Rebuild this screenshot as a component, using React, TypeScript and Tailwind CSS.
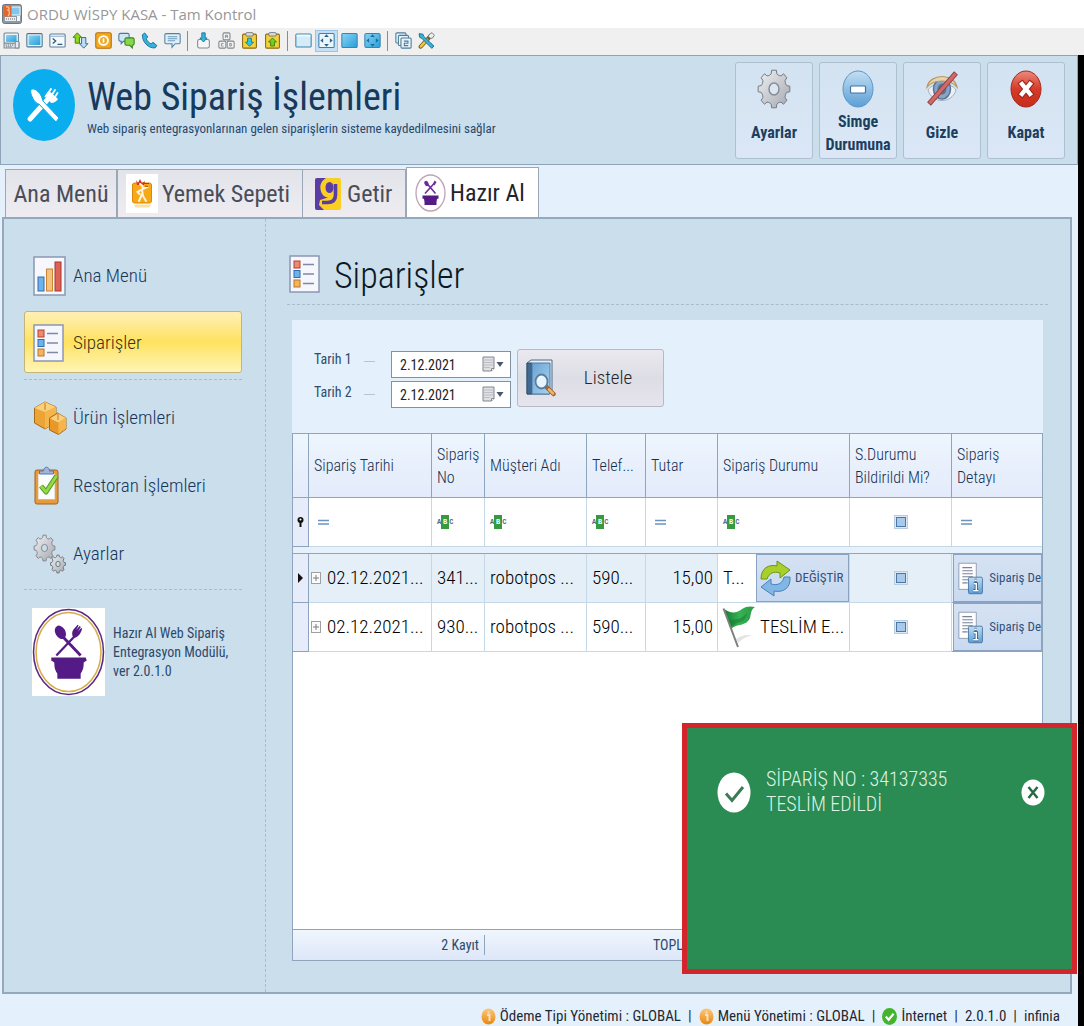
import type { ReactNode } from 'react';

/* ---------- toolbar icons (16x16) ---------- */

function Ico({ children }: { children: ReactNode }) {
  return (
    <svg width="17" height="17" viewBox="0 0 16 16" fill="none" aria-hidden="true">
      {children}
    </svg>
  );
}

const Arrows4 = ({ color }: { color: string }) => (
  <g fill={color}>
    <path d="M8 2.2l2.2 2.6H5.8z" />
    <path d="M8 13.8l2.2-2.6H5.8z" />
    <path d="M2.2 8l2.6-2.2v4.4z" />
    <path d="M13.8 8l-2.6-2.2v4.4z" />
  </g>
);

const Clipboard = ({ up = false }: { up?: boolean }) => (
  <>
    <rect x="1.5" y="2" width="13" height="13.2" rx="1" fill="#f3d03c" stroke="#8c6a12" />
    <rect x="4.5" y="0.6" width="7" height="3.2" rx="1" fill="#d9dde0" stroke="#6b6f73" strokeWidth=".8" />
    {up ? (
      <path d="M8 5.6l3.8 3.8H9.8v3.8H6.2V9.4H4.2z" fill="#6ed31c" stroke="#2e7d12" strokeWidth=".8" />
    ) : (
      <path d="M8 13.4l3.8-3.8H9.8V5.8H6.2v3.8H4.2z" fill="#35c6de" stroke="#1b7284" strokeWidth=".8" />
    )}
  </>
);

const toolGroups: { label: string; active?: boolean; art: ReactNode }[][] = [
  [
    {
      label: 'Bilgisayar',
      art: (
        <>
          <rect x="1" y="1" width="13.5" height="9.500" rx="1" fill="#f2f5f7" stroke="#6b8295" />
          <rect x="2.8" y="2.8" width="10" height="6.500" fill="url(#tbBlue)" />
          <path d="M1 10.500h14v4.500H1z" fill="#dfe4e8" stroke="#7d8a95" />
          <path d="M2.500 12.200h7M3 13.800h6" stroke="#536270" strokeDasharray="1 1" />
          <rect x="11.500" y="9" width="3.500" height="6" rx=".6" fill="#e8ecef" stroke="#7d8a95" />
        </>
      ),
    },
    {
      label: 'Ekran',
      art: (
        <>
          <rect x=".8" y="1.500" width="14.400" height="12.500" rx="1" fill="#eef6fb" stroke="#47708f" />
          <rect x="2.500" y="3.200" width="11" height="9" fill="url(#tbBlue)" />
        </>
      ),
    },
    {
      label: 'Komut satırı',
      art: (
        <>
          <rect x=".8" y="1.8" width="14.4" height="12.4" rx="1" fill="#f4f9fc" stroke="#5b7f9b" />
          <path d="M1 4h14" stroke="#8fb2cb" />
          <path d="M3.5 6.2l2.8 2.3-2.8 2.3M8 11.6h4.5" stroke="#2f5a7c" strokeWidth="1.2" />
        </>
      ),
    },
    {
      label: 'Dosya aktarımı',
      art: (
        <>
          <path d="M5 .8l4 4.2H7v5.5H3V5H1z" fill="#8fd61f" stroke="#3e7d18" strokeWidth=".9" />
          <path d="M11 15.2l4-4.2h-2V5.2H9V11H7z" fill="#b9dff2" stroke="#2a6a96" strokeWidth=".9" />
        </>
      ),
    },
    {
      label: 'Güç',
      art: (
        <>
          <rect x=".7" y=".7" width="14.6" height="14.6" rx="1.5" fill="#f4a81c" stroke="#b76e0b" />
          <circle cx="8" cy="8" r="4.2" stroke="#fff" strokeWidth="1.7" />
          <path d="M8 6v4" stroke="#fff" strokeWidth="1.6" />
        </>
      ),
    },
    {
      label: 'Sohbet',
      art: (
        <>
          <path d="M.8 2.800c0-1 .5-1.500 1.500-1.500H9c1 0 1.500.5 1.500 1.500v4.500c0 1-.5 1.500-1.500 1.500H5l-2 2.200V8.800C1.500 8.800.8 8.300.8 7.300z" fill="#cfe7f5" stroke="#46799d" />
          <path d="M6.500 7c0-1 .5-1.500 1.500-1.500h5.700c1 0 1.500.5 1.500 1.500v4c0 1-.5 1.500-1.700 1.500v2.500L11 12.500H8c-1 0-1.500-.5-1.500-1.500z" fill="#86d84a" stroke="#3a8222" />
        </>
      ),
    },
    {
      label: 'Telefon',
      art: (
        <path
          d="M1.3 2.6l2.2-1.7L6.4 4.6 4.9 6.3c.9 2.1 2.4 3.7 4.6 4.9l1.8-1.5 3.6 3-1.5 2.2C7 15.9.9 9 1.3 2.6z"
          fill="#38b2dc"
          stroke="#1c6f9b"
          strokeWidth=".9"
        />
      ),
    },
    {
      label: 'Mesaj',
      art: (
        <>
          <path d="M2 1.500h12c.8 0 1.200.4 1.200 1.200v7.100c0 .8-.4 1.200-1.200 1.200h-3.500L7.500 14.500V11H2c-.8 0-1.200-.4-1.200-1.200V2.700c0-.8.4-1.200 1.200-1.200z" fill="#dff0fa" stroke="#52829f" />
          <path d="M3.500 4.400h9M3.500 6.300h9M3.500 8.200h7" stroke="#6c9bbb" />
        </>
      ),
    },
  ],
  [
    {
      label: 'Ctrl+Alt+Del',
      art: (
        <>
          <path d="M2.500 8.500c0-1 .5-1.500 1.500-1.500h8c1 0 1.500.5 1.500 1.500V13.500c0 1-.5 1.500-1.500 1.500H4c-1 0-1.500-.5-1.500-1.500z" fill="#f4f5f6" stroke="#83898e" />
          <path d="M8 9.4l3.4-3.8H9.6V.8H6.4v4.8H4.6z" fill="#35b4dd" stroke="#1b6d8f" strokeWidth=".8" />
        </>
      ),
    },
    {
      label: 'Tuş gönder',
      art: (
        <g stroke="#83878b" fill="#f1f2f3">
          <rect x="4.700" y=".8" width="6.600" height="6.600" rx="1.200" />
          <rect x=".8" y="8.600" width="6.600" height="6.600" rx="1.200" />
          <rect x="8.600" y="8.600" width="6.600" height="6.600" rx="1.200" />
          <path d="M7 5.500V3h2v2.500M7 4.300h2M5.200 10.800h-2v2.400h2M11 10.800h1.500v2.400H11z" strokeWidth=".8" />
        </g>
      ),
    },
    { label: 'Panodan al', art: <Clipboard /> },
    { label: 'Panoya gönder', art: <Clipboard up /> },
  ],
  [
    {
      label: 'Pencere',
      art: (
        <>
          <rect x=".8" y="1.8" width="14.4" height="12.4" rx="1" fill="#d3ecf8" stroke="#3d82ae" />
          <path d="M1.500 3.400h13" stroke="#f0fafe" strokeWidth="1.600" />
        </>
      ),
    },
    {
      label: 'Sığdır',
      active: true,
      art: (
        <>
          <rect x=".8" y="1.4" width="14.4" height="13.2" rx="1" fill="#eaf6fc" stroke="#3d7fa9" />
          <Arrows4 color="#2b6288" />
        </>
      ),
    },
    {
      label: 'Tam ekran',
      art: <rect x=".8" y="1.4" width="14.4" height="13.2" rx="1" fill="url(#tbBlue)" stroke="#3d82ae" />,
    },
    {
      label: 'Ölçekle',
      art: (
        <>
          <rect x=".8" y="1.4" width="14.4" height="13.2" rx="1.5" fill="url(#tbBlue)" stroke="#3d82ae" />
          <Arrows4 color="#1b6e9e" />
        </>
      ),
    },
  ],
  [
    {
      label: 'Pencereler',
      art: (
        <g stroke="#4d7c99" fill="#e8f3f9">
          <rect x=".8" y=".8" width="9.5" height="9.5" rx="1" />
          <rect x="3.2" y="3.2" width="9.5" height="9.5" rx="1" />
          <rect x="5.6" y="5.6" width="9.6" height="9.6" rx="1" />
          <path d="M8.4 8.6h3.8v2H8.8v2.2h3.6" fill="none" />
        </g>
      ),
    },
    {
      label: 'Araçlar',
      art: (
        <>
          <path d="M2.500 13.800l9-9.600" stroke="#6b5a1c" strokeWidth="3.800" strokeLinecap="round" />
          <path d="M2.700 13.600l6-6.400" stroke="#f2c53b" strokeWidth="2.400" strokeLinecap="round" />
          <path d="M10.2 2.600l3-2 2.200 2.400-1.800 2.800-2 .2-1.800-1.800z" fill="#eceff0" stroke="#6a6f72" strokeWidth=".8" />
          <path d="M1 1.600l3.600.4.8 2.200 9.600 9-2 2.200L3.800 6.200 1.600 5z" fill="#39b1dc" stroke="#1b6c90" strokeWidth=".9" />
        </>
      ),
    },
  ],
];

/* ---------- larger drawings ---------- */

const gearPath = (cx: number, cy: number, rx: number, ry: number, teeth = 8) => {
  const pts: string[] = [];
  for (let i = 0; i < teeth; i++) {
    const a = (i / teeth) * Math.PI * 2 - Math.PI / 2;
    const s = Math.PI / teeth;
    [
      [a - s * 0.9, 0.78],
      [a - s * 0.55, 0.82],
      [a - s * 0.38, 1],
      [a + s * 0.38, 1],
      [a + s * 0.55, 0.82],
      [a + s * 0.9, 0.78],
    ].forEach(([ang, r]) => pts.push(`${(cx + Math.cos(ang) * rx * r).toFixed(2)} ${(cy + Math.sin(ang) * ry * r).toFixed(2)}`));
  }
  return `M${pts.join('L')}Z`;
};

const GearIcon = () => (
  <svg width="34" height="40" viewBox="0 0 34 40" aria-hidden="true">
    <path d={gearPath(17, 20, 16, 19)} fill="url(#gearG)" stroke="#777b82" strokeLinejoin="round" />
    <ellipse cx="17" cy="20" rx="5" ry="6" fill="#dce6f2" stroke="#888d95" strokeWidth="1.5" />
  </svg>
);

const MinusIcon = () => (
  <svg width="34" height="40" viewBox="0 0 34 40" aria-hidden="true">
    <ellipse cx="17" cy="20" rx="15" ry="18" fill="url(#minusG)" stroke="#5c97c4" />
    <rect x="9.5" y="17" width="15" height="7" rx="1" fill="#fff" stroke="#3f74a3" strokeWidth="1.2" />
  </svg>
);

const EyeIcon = () => (
  <svg width="34" height="40" viewBox="0 0 34 40" fill="none" aria-hidden="true">
    <path d="M3 21c5-8 23-8 28 0-4 14-24 14-28 0z" fill="#edf1f6" stroke="#a5aebb" />
    <ellipse cx="17" cy="20" rx="8.500" ry="10" fill="#8aa4c4" stroke="#54749a" strokeWidth="1.500" />
    <ellipse cx="17" cy="20" rx="4.500" ry="5.500" fill="#5a7599" />
    <path d="M2 18C5 4 29 4 32 18c-7-8-23-8-30 0z" fill="#e8d3b0" stroke="#b9985f" strokeWidth="1.200" />
    <path d="M31 4L4 35" stroke="#8f3d3d" strokeWidth="5" />
    <path d="M30.500 4.600L4.500 34.400" stroke="#cf6a66" strokeWidth="3.400" />
  </svg>
);

const CloseIcon = () => (
  <svg width="34" height="40" viewBox="0 0 34 40" aria-hidden="true">
    <ellipse cx="17" cy="20" rx="15" ry="18" fill="url(#redG)" stroke="#a8271b" />
    <path d="M13 15l8 10M21 15l-8 10" stroke="#9d2518" strokeWidth="6.500" strokeLinecap="square" />
    <path d="M13 15l8 10M21 15l-8 10" stroke="#fff" strokeWidth="4.400" strokeLinecap="square" />
  </svg>
);

const CutleryLogo = () => (
  <svg width="62" height="72" viewBox="0 0 62 72" fill="none" aria-hidden="true">
    <ellipse cx="31" cy="36" rx="31" ry="36" fill="#0aadee" />
    <path d="M17 50L36 29" stroke="#fff" strokeWidth="5" strokeLinecap="round" />
    <path d="M33 27l5 7c3 0 6-2 7-4l-9-8c-2 1-3 3-3 5z" fill="#fff" />
    <path d="M34 26l4-6M37.500 28l4.500-7M41 29.500L44.500 24M32.500 27.500L38 20" stroke="#fff" strokeWidth="1.800" strokeLinecap="round" />
    <path d="M19 20c4-1 9 5 10 9l1 3 16 17-3 4-17-18c-5 0-11-14-7-15z" fill="#fff" stroke="#0aadee" />
  </svg>
);

const BowlArt = () => (
  <>
    <path d="M24 47L43 27" stroke="#541a86" strokeWidth="2.2" />
    <path d="M48 47L29 27" stroke="#541a86" strokeWidth="2.800" />
    <ellipse cx="28" cy="24" rx="5" ry="7" transform="rotate(-30 28 24)" fill="#541a86" />
    <path d="M40 28c-1-4 0-6 2-8l3-3.500 1 .8-2.500 4.500 3.500-4 1.200.9-3 4.600 3.400-3.600.9.9C48 25 46 29 41.500 29.500z" fill="#541a86" />
    <path d="M19 49h34l1 3-3 2c0 6-1 8-3 11v5H25v-5c-2-3-3-5-3-11l-3-2z" fill="#541a86" />
  </>
);

const HazirLogo = ({ className }: { className: string }) => (
  <svg className={className} viewBox="0 0 72 87" preserveAspectRatio="none" fill="none" aria-hidden="true">
    <rect width="72" height="87" fill="#fff" />
    <ellipse cx="36" cy="43.500" rx="34.500" ry="42" stroke="#5a2a86" strokeWidth="1.500" />
    <ellipse cx="36" cy="43.500" rx="32" ry="39" stroke="#d9ab4a" strokeWidth="1.500" />
    <BowlArt />
  </svg>
);

const HazirTabLogo = () => (
  <svg width="31" height="38" viewBox="0 0 31 38" fill="none" aria-hidden="true">
    <ellipse cx="15.500" cy="19" rx="14.500" ry="18" fill="#fff" stroke="#bfa3b8" strokeWidth="1.300" />
    <path d="M10 19.500L19.500 9M20.500 19.500L11.500 9" stroke="#6d2c9c" strokeWidth="1.600" />
    <ellipse cx="11.500" cy="9.500" rx="2" ry="2.800" fill="#6d2c9c" transform="rotate(-25 11.500 9.500)" />
    <path d="M18 10l1.500-3.500 2 1.400-2 3.500z" fill="#6d2c9c" />
    <path d="M7.500 21.500h16v3l-1.500.500-.500 3v3H9.500v-3l-.500-3-1.500-.500z" fill="#541a86" />
  </svg>
);

const YemekLogo = () => (
  <svg width="32" height="39" viewBox="0 0 32 39" fill="none" aria-hidden="true">
    <rect width="32" height="39" fill="#fff" />
    <rect x="6.500" y="9" width="19" height="20" rx="2" fill="#f6a915" stroke="#d98a0c" />
    <path d="M8 30.500h17l-1.500 3h-14z" fill="#fbe0a3" />
    <path d="M10 6l2 3 2-4 2 4 3-2-1 4h-7z" fill="#d3342a" />
    <path d="M14 10c2 1 3 3 2.500 5l5-2M16.500 15l-5 3 2 2M16 16l1 6 3 5M16 20l-3 7" stroke="#fff3df" strokeWidth="2" strokeLinecap="round" />
    <path d="M18 9.500h5M19 12l3 .5" stroke="#b8391f" strokeWidth="1" />
  </svg>
);

const GetirLogo = () => (
  <svg width="26" height="32" viewBox="0 0 26 32" fill="none" aria-hidden="true">
    <rect width="26" height="32" rx="2" fill="#fbcf22" />
    <path d="M2 0h9C6 3 5 7 5.500 11c.5 5 3.500 8 7.500 8.500L5 22l-1 5 5 5H2a2 2 0 01-2-2V2a2 2 0 012-2z" fill="#5a3ca6" />
    <ellipse cx="14.500" cy="9.500" rx="4" ry="5.500" fill="#5a3ca6" />
    <path d="M20.500 6v11c0 5-3 7.500-8 7.500H7" stroke="#5a3ca6" strokeWidth="3.600" />
  </svg>
);

const ChartIcon = () => (
  <svg width="33" height="40" viewBox="0 0 33 40" aria-hidden="true">
    <rect x="1" y="1" width="31" height="38" fill="#f7f8fd" stroke="#8b98b3" strokeWidth="1.500" />
    <rect x="5" y="21" width="6" height="14" fill="#6db3ea" stroke="#2f6fae" />
    <rect x="13.500" y="13" width="6" height="22" fill="#f5c27a" stroke="#c98432" />
    <rect x="22" y="6" width="6" height="29" fill="#dd6355" stroke="#a83730" />
  </svg>
);

const ListIcon = () => (
  <svg width="31" height="38" viewBox="0 0 31 38" aria-hidden="true">
    <rect x="1" y="1" width="29" height="36" fill="#f5f7fd" stroke="#8c96b4" strokeWidth="1.500" />
    <rect x="5" y="6" width="6" height="7" fill="#ee8a72" stroke="#b5402f" />
    <rect x="5" y="15.500" width="6" height="7" fill="#6fb2ea" stroke="#2d6fb0" />
    <rect x="5" y="25" width="6" height="7" fill="#f3b45c" stroke="#b97824" />
    <path d="M14 9.500h11M14 19h11M14 28.500h11" stroke="#8088a4" strokeWidth="1.500" />
  </svg>
);

const BoxesIcon = () => (
  <svg width="34" height="36" viewBox="0 0 34 36" strokeLinejoin="round" aria-hidden="true">
    <path d="M1.500 8L12 2l11 5v15l-11 7L1.500 23z" fill="#eda436" stroke="#a8691a" />
    <path d="M1.500 8L12 2l11 5-11 5z" fill="#fbd07a" />
    <path d="M12 12l11-5v15l-11 7z" fill="#f4b54a" />
    <path d="M16.500 18l8-5 8.500 5v11l-7.500 5.500-9-4.500z" fill="#e8982b" stroke="#a8691a" />
    <path d="M17 18.500l8-5 8 4.500-7.500 4.500z" fill="#fbd07a" />
    <path d="M25.500 22.500l7.500-4.500v10.500l-7.500 5.500z" fill="#f4b54a" />
    <path d="M12 3v7M25 14v6" stroke="#c98a2d" strokeWidth="1.200" />
  </svg>
);

const TaskIcon = () => (
  <svg width="28" height="40" viewBox="0 0 28 40" fill="none" aria-hidden="true">
    <rect x="2" y="4" width="23" height="34" rx="2" fill="#e59a3c" stroke="#a9631a" />
    <rect x="5" y="7.500" width="17" height="26" fill="#fbfcfe" stroke="#c9b08a" strokeWidth=".7" />
    <path d="M6.500 8V5h4c0-5 6-5 6 0h4v3z" fill="#9db4dd" stroke="#5c76ab" />
    <path d="M8 20l5 6L23.500 10" stroke="#4f9a1d" strokeWidth="5" strokeLinejoin="round" />
    <path d="M8 20l5 6L23.500 10" stroke="#93d846" strokeWidth="3" strokeLinejoin="round" />
  </svg>
);

const GearsIcon = () => (
  <svg width="34" height="40" viewBox="0 0 34 40" aria-hidden="true">
    <path d={gearPath(11.5, 14, 10.5, 13)} fill="url(#gearG)" stroke="#85888f" strokeLinejoin="round" />
    <ellipse cx="11.500" cy="14" rx="3" ry="3.600" fill="#cbdeec" stroke="#85888f" />
    <path d={gearPath(25, 30, 7.5, 9)} fill="url(#gearG)" stroke="#75787f" strokeLinejoin="round" />
    <ellipse cx="25" cy="30" rx="2.200" ry="2.700" fill="#cbdeec" stroke="#75787f" />
  </svg>
);

const BookIcon = () => (
  <svg width="32" height="38" viewBox="0 0 32 38" fill="none" aria-hidden="true">
    <path d="M2 4l4-3h21v31l-3 3H2z" fill="#e9eef4" stroke="#4c6a88" />
    <path d="M2 4h5v31H2z" fill="#41698f" stroke="#30506f" />
    <path d="M7 4h18v31H7z" fill="url(#bookG)" stroke="#4a7ba6" />
    <path d="M21.500 28l7 7" stroke="#a1672b" strokeWidth="4.500" strokeLinecap="round" />
    <path d="M24 30.500l4 4" stroke="#efb36c" strokeWidth="2.500" strokeLinecap="round" />
    <ellipse cx="16.500" cy="22.500" rx="6" ry="7" fill="#e6f4fd" stroke="#5c7d9e" strokeWidth="1.800" />
    <path d="M13.500 21c.5-2.500 2-3.500 3.500-3.500" stroke="#fff" strokeWidth="1.500" />
  </svg>
);

const CalendarGlyph = () => (
  <svg width="22" height="17" viewBox="0 0 22 17" aria-hidden="true">
    <path d="M1 1h11v11.500L9.500 15H1z" fill="#dfe0e4" stroke="#83868f" />
    <path d="M2 4h9M2 6.500h9M2 9h9M2 11.500h6" stroke="#b4b6bd" strokeWidth=".8" />
    <path d="M9.500 15v-2.500H12" fill="#fff" stroke="#83868f" />
    <path d="M14.500 6h7L18 11z" fill="#44586e" />
  </svg>
);

const RefreshIcon = () => (
  <svg width="31" height="37" viewBox="0 0 31 37" strokeLinejoin="round" aria-hidden="true">
    <path d="M1 19C1 8 9 4 17 6V1l13 9-10 8v-5c-6-2-11 0-13 6z" fill="#a9cf2b" stroke="#6c9416" />
    <path d="M30 17c1 11-7 16-16 14v5L1 27l10-8v5c7 2 12-1 13-7z" fill="#82b6e6" stroke="#4682bb" />
  </svg>
);

const FlagIcon = () => (
  <svg width="36" height="43" viewBox="0 0 36 43" aria-hidden="true">
    <path d="M14 33c6-4 12-5 16-3-6 0-9 3-14 7z" fill="#e3e4e3" />
    <path d="M2 3c7 5 13 4 18 0 4-3 9-3 13-2-4 2-4 7-5 11-4 9-13 5-19 11z" fill="url(#flagG)" />
    <path d="M6 13c8 2 15-1 19-6-1 8-6 9-10 10-3 1-5 3-7 4z" fill="#0f6d2a" opacity=".4" />
    <path d="M1.500 2.500L16 41" stroke="#7b817c" strokeWidth="2" />
  </svg>
);

const DetailIcon = () => (
  <svg width="29" height="37" viewBox="0 0 29 37" aria-hidden="true">
    <path d="M1 1h20v30H1z" fill="#fdfdff" stroke="#8a95ab" />
    <path d="M5 6h11M5 9.500h12M5 13h12M5 16.500h12M5 20h7M5 23.500h6" stroke="#7a8296" strokeWidth="1.200" />
    <rect x="12" y="17" width="16" height="19" rx="1.500" fill="url(#minusG)" stroke="#41719c" />
    <path d="M18 24.500h3v8M17.500 32.500h6M19 20.500h2.500" stroke="#285580" strokeWidth="3.600" fill="none" />
    <path d="M18 24.500h3v8M17.500 32.500h6M19 20.500h2.500" stroke="#fff" strokeWidth="1.800" fill="none" />
  </svg>
);

const InfoDot = () => (
  <svg width="15" height="17" viewBox="0 0 15 17" aria-hidden="true">
    <ellipse cx="7.500" cy="8.500" rx="7" ry="8" fill="url(#orangeG)" />
    <path d="M6 7h2.500v6M7.500 3.500v2" stroke="#fbe0b5" strokeWidth="2" fill="none" />
  </svg>
);

const OkDot = () => (
  <svg width="15" height="17" viewBox="0 0 15 17" aria-hidden="true">
    <ellipse cx="7.500" cy="8.500" rx="7.500" ry="8.500" fill="#43b52c" />
    <path d="M3.800 8.500l2.800 3.200 5-6" stroke="#fff" strokeWidth="2.200" fill="none" />
  </svg>
);

const Defs = () => (
  <svg width="0" height="0" className="absolute" aria-hidden="true">
    <defs>
      <linearGradient id="tbBlue" x1="0" y1="0" x2="1" y2="1">
        <stop offset="0" stopColor="#8ad4f6" />
        <stop offset="1" stopColor="#269fd8" />
      </linearGradient>
      <linearGradient id="gearG" x1="0" y1="0" x2="1" y2="1">
        <stop offset="0" stopColor="#f0f1f4" />
        <stop offset="1" stopColor="#a3a7ae" />
      </linearGradient>
      <linearGradient id="minusG" x1="0" y1="0" x2="0" y2="1">
        <stop offset="0" stopColor="#c3def3" />
        <stop offset="1" stopColor="#5b9fd6" />
      </linearGradient>
      <linearGradient id="redG" x1="0" y1="0" x2="0" y2="1">
        <stop offset="0" stopColor="#ea8b7d" />
        <stop offset=".5" stopColor="#d63a28" />
        <stop offset="1" stopColor="#c42d1c" />
      </linearGradient>
      <linearGradient id="bookG" x1="0" y1="0" x2="1" y2="1">
        <stop offset="0" stopColor="#6ba3d2" />
        <stop offset="1" stopColor="#a9d3f2" />
      </linearGradient>
      <linearGradient id="flagG" x1="0" y1="0" x2="1" y2="0">
        <stop offset="0" stopColor="#187a33" />
        <stop offset=".5" stopColor="#35b254" />
        <stop offset="1" stopColor="#2b9a47" />
      </linearGradient>
      <linearGradient id="orangeG" x1="0" y1="0" x2="0" y2="1">
        <stop offset="0" stopColor="#fbc87d" />
        <stop offset="1" stopColor="#e8870f" />
      </linearGradient>
    </defs>
  </svg>
);

/* ---------- page parts ---------- */

function TitleBar() {
  return (
    <div className="flex h-7 items-center gap-1 bg-white pl-0.5">
      <svg width="20" height="20" viewBox="0 0 20 20" aria-hidden="true">
        <rect x=".5" y=".5" width="19" height="19" rx="2" fill="#8d99a5" stroke="#6d7883" />
        <rect x="8" y="3" width="10" height="8" fill="#7cc8ee" stroke="#f1f4f6" />
        <rect x="1.500" y="1.500" width="8" height="11" fill="#e0662a" />
        <path d="M4 3c3-1 4 2 2 3 2 1 2 4 0 6" stroke="#f9b48c" strokeWidth="1.500" fill="none" />
        <path d="M3 13h11v4H3z" fill="#eceff1" />
        <path d="M4 15h9" stroke="#596672" strokeDasharray="1 1" />
        <rect x="15" y="12" width="3" height="5" fill="#f3f5f6" />
      </svg>
      <h1 className="pl-px font-['Open_Sans',sans-serif] text-[15px] leading-5 text-[#979797]">ORDU WİSPY KASA - Tam Kontrol</h1>
    </div>
  );
}

function Toolbar() {
  return (
    <div role="toolbar" aria-label="Uzak bağlantı" className="flex h-[27px] items-center bg-[#f1f0f0] pb-0.5">
      {toolGroups.map((group, g) => (
        <div key={g} className="flex items-center">
          {g > 0 && <span className="mr-1 ml-[3px] h-5 w-px bg-[#8c8c8c]" />}
          {group.map((t) => (
            <button
              key={t.label}
              type="button"
              aria-label={t.label}
              className={
                t.active
                  ? 'flex h-[22px] w-[23px] items-center justify-center border border-[#9ac3e4] bg-[#c5e0f5]'
                  : 'flex h-[22px] w-[23px] items-center justify-center'
              }
            >
              <Ico>{t.art}</Ico>
            </button>
          ))}
        </div>
      ))}
    </div>
  );
}

const headerButtons: { label: string; icon: ReactNode }[] = [
  { label: 'Ayarlar', icon: <GearIcon /> },
  { label: 'Simge Durumuna', icon: <MinusIcon /> },
  { label: 'Gizle', icon: <EyeIcon /> },
  { label: 'Kapat', icon: <CloseIcon /> },
];

function Header() {
  return (
    <header className="flex h-[110px] justify-between border border-[#8ea4b8] bg-[#cbdeec] pr-3 pl-3">
      <div className="flex gap-3 pt-[13px]">
        <CutleryLogo />
        <div className="pt-1.5">
          <h2 className="text-[38px] leading-[44px] text-[#173a5c]">Web Sipariş İşlemleri</h2>
          <p className="text-[13px] leading-5 text-[#27496d]">
            Web sipariş entegrasyonlarınan gelen siparişlerin sisteme kaydedilmesini sağlar
          </p>
        </div>
      </div>
      <div className="flex gap-1.5 pt-1.5">
        {headerButtons.map((b) => (
          <button
            key={b.label}
            type="button"
            className="flex h-[97px] w-[78px] flex-col items-center rounded-[3px] border border-[#aebfd2] bg-linear-to-b from-[#d3e3f1] to-[#dbe7f6] pt-1.5 pb-0.5 text-base leading-[23px] font-bold text-[#1d3f5f]"
          >
            {b.icon}
            <span className="flex flex-1 items-center justify-center">{b.label}</span>
          </button>
        ))}
      </div>
    </header>
  );
}

function Tabs() {
  const base =
    'flex h-12 items-center border border-b-0 border-[#9aa7b6] bg-linear-to-b from-[#e2e4ea] to-[#eeecf1] text-2xl text-[#4a4d58]';
  return (
    <div role="tablist" className="flex h-[52px] shrink-0 items-end pl-[5px]">
      <button role="tab" aria-selected={false} type="button" className={`${base} w-28 justify-center`}>
        Ana Menü
      </button>
      <button role="tab" aria-selected={false} type="button" className={`${base} w-[186px] gap-1 pl-2`}>
        <YemekLogo />
        Yemek Sepeti
      </button>
      <button role="tab" aria-selected={false} type="button" className={`${base} w-[103px] gap-1.5 border-l-0 pl-3`}>
        <GetirLogo />
        Getir
      </button>
      <button
        role="tab"
        aria-selected={true}
        type="button"
        className="flex h-[50px] w-[133px] items-center gap-1 border border-b-0 border-[#9aa7b6] bg-white pl-2 text-2xl text-[#22242c]"
      >
        <HazirTabLogo />
        Hazır Al
      </button>
    </div>
  );
}

function NavItem({ label, icon, active = false }: { label: string; icon: ReactNode; active?: boolean }) {
  return (
    <a
      href="#"
      aria-current={active ? 'page' : undefined}
      className={
        active
          ? 'flex h-[62px] items-center rounded-[3px] border border-[#c3b477] bg-linear-to-b from-[#fdf0b4] via-[#ffe25c] to-[#fef5b5] px-[7px] pt-0.5 text-[19px] font-light text-[#33331a]'
          : 'flex h-[62px] items-center border border-transparent px-[7px] pt-0.5 text-[19px] font-light text-[#16365a]'
      }
    >
      <span className="flex w-[41px] items-center pl-px">{icon}</span>
      {label}
    </a>
  );
}

function Sidebar() {
  return (
    <aside className="w-[262px] shrink-0 border-r border-dashed border-[#a8bccd] pt-[25px] pr-[23px] pl-5">
      <nav className="flex flex-col">
        <div className="flex flex-col gap-[5px]">
          <NavItem label="Ana Menü" icon={<ChartIcon />} />
          <NavItem label="Siparişler" icon={<ListIcon />} active />
        </div>
        <hr className="my-[6px] border-t border-dashed border-[#a8bccd]" />
        <div className="flex flex-col gap-[6px]">
          <NavItem label="Ürün İşlemleri" icon={<BoxesIcon />} />
          <NavItem label="Restoran İşlemleri" icon={<TaskIcon />} />
          <NavItem label="Ayarlar" icon={<GearsIcon />} />
        </div>
        <hr className="mt-[5px] border-t border-dashed border-[#a8bccd]" />
      </nav>
      <div className="mt-[18px] flex items-center gap-2 pl-2">
        <HazirLogo className="h-[88px] w-[73px] shrink-0" />
        <p className="text-sm leading-[19px] whitespace-nowrap text-[#2b4a6b]">
          Hazır Al Web Sipariş
          <br />
          Entegrasyon Modülü,
          <br />
          ver 2.0.1.0
        </p>
      </div>
    </aside>
  );
}

function DateField({ id }: { id: string }) {
  return (
    <div className="flex h-[27px] w-[120px] items-center border border-[#8292a3] bg-white pr-1.5 pl-2">
      <input id={id} defaultValue="2.12.2021" className="w-0 flex-1 text-sm text-[#222] outline-none" />
      <button type="button" aria-label="Takvimi aç">
        <CalendarGlyph />
      </button>
    </div>
  );
}

function FilterForm() {
  return (
    <div className="flex h-[113px] pt-[29px] pl-[22px] text-sm">
      <div className="flex w-[77px] flex-col text-[#2f4d6d]">
        {['tarih1', 'tarih2'].map((id, i) => (
          <div key={id} className="flex h-[33px] gap-3 pr-4">
            <label htmlFor={id} className="leading-5">{`Tarih ${i + 1}`}</label>
            <span className="mt-3 h-px flex-1 bg-[#b3c6d6]" />
          </div>
        ))}
      </div>
      <div className="flex flex-col gap-[3px] pt-[2px]">
        <DateField id="tarih1" />
        <DateField id="tarih2" />
      </div>
      <button
        type="button"
        className="ml-1.5 flex h-[58px] w-[147px] items-center rounded-[3px] border border-[#b5bac6] bg-linear-to-b from-[#ebe9ef] via-[#dddde5] to-[#e6e4ec] pl-[7px] text-[19px] font-light text-[#24262e]"
      >
        <BookIcon />
        <span className="flex-1 pr-1 text-center">Listele</span>
      </button>
    </div>
  );
}

const EqualsMark = () => (
  <svg width="11" height="7" viewBox="0 0 11 7" className="ml-1" role="img" aria-label="Eşittir">
    <path d="M0 1.500h11M0 5h11" stroke="#6d93bb" strokeWidth="1.500" />
  </svg>
);

const AbcMark = () => (
  <span className="flex items-center font-['Liberation_Mono',monospace] text-[7px] font-bold text-[#4a6a8c]">
    A<span className="flex h-3.5 w-2 items-center justify-center bg-[#379a3f] text-white">B</span>C
  </span>
);

function TickBox({ label }: { label: string }) {
  return (
    <input
      type="checkbox"
      aria-label={label}
      className="mx-auto block size-[14px] appearance-none border border-[#b9cde0] bg-[#a9c9ea] shadow-[inset_0_0_0_1px_#dce8f4,inset_0_0_0_2px_#4d78a6]"
    />
  );
}

const columns = [
  'Sipariş Tarihi',
  'Sipariş No',
  'Müşteri Adı',
  'Telef...',
  'Tutar',
  'Sipariş Durumu',
  'S.Durumu Bildirildi Mi?',
  'Sipariş Detayı',
];
const filters = ['=', 'abc', 'abc', 'abc', '=', 'abc', 'box', '='];

const orders = [
  { no: '341...', selected: true },
  { no: '930...', selected: false },
];

function OrdersTable() {
  const cell = 'border-r border-b border-[#c5d8e8] pr-1 pl-[5px] whitespace-nowrap overflow-hidden';
  const marker = 'border-r border-b border-[#8da3bd] bg-[#e6ecfa]';
  return (
    <table className="w-full table-fixed border-separate border-spacing-0 border-x border-t border-[#8fa5bd] text-left">
      <colgroup>
        <col className="w-4" />
        <col className="w-[123px]" />
        <col className="w-[53px]" />
        <col className="w-[102px]" />
        <col className="w-[59px]" />
        <col className="w-[72px]" />
        <col />
        <col className="w-[102px]" />
        <col className="w-[90px]" />
      </colgroup>
      <thead>
        <tr className="h-16 text-base leading-[23px] text-[#2b4a6b]">
          <th aria-label="Satır" className="border-r border-b border-[#8fa5bd] bg-linear-to-b from-[#edf5fd] to-[#e4ebfb]" />
          {columns.map((c, i) => (
            <th
              key={c}
              className={`border-b border-[#8fa5bd] bg-linear-to-b from-[#edf5fd] to-[#e4ebfb] pl-[5px] font-light text-[#12304f] ${i < columns.length - 1 ? 'border-r' : 'pr-8'}`}
            >
              {c}
            </th>
          ))}
        </tr>
      </thead>
      <tbody>
        <tr className="h-[49px]">
          <td className={marker}>
            <svg width="7" height="10" viewBox="0 0 7 10" className="mx-auto" aria-hidden="true">
              <ellipse cx="3.500" cy="3" rx="3" ry="3" fill="#111" />
              <path d="M2.500 5h2v5h-2z" fill="#111" />
              <circle cx="3.500" cy="2.500" r="1" fill="#fff" />
            </svg>
          </td>
          {filters.map((f, i) => (
            <td key={i} className={`${cell} bg-white ${i === filters.length - 1 ? 'border-r-0' : ''}`}>
              {f === '=' && <EqualsMark />}
              {f === 'abc' && <AbcMark />}
              {f === 'box' && <TickBox label="Bildirildi filtresi" />}
            </td>
          ))}
        </tr>
        <tr className="h-[7px]">
          <td colSpan={9} className="border-b border-[#8fa5bd] bg-[#e6f1fb]" />
        </tr>
        {orders.map((o) => (
          <tr key={o.no} className={`h-[49px] text-[19px] font-light text-black ${o.selected ? 'bg-[#e5eff7]' : 'bg-white'}`}>
            <td className={marker}>
              {o.selected && (
                <svg width="5" height="10" viewBox="0 0 5 10" className="mx-auto" aria-hidden="true">
                  <path d="M0 0l5 5-5 5z" fill="#111" />
                </svg>
              )}
            </td>
            <td className="overflow-hidden border-r border-b border-[#c5d8e8] pl-0.5 whitespace-nowrap">
              <div className="flex items-center gap-1.5">
                <button type="button" aria-label="Ayrıntıları aç">
                  <svg width="10" height="12" viewBox="0 0 10 12" aria-hidden="true">
                    <rect x=".5" y=".5" width="9" height="11" fill="#fafafa" stroke="#a0a0a0" />
                    <path d="M2 6h6M5 3v6" stroke="#7c7c7c" />
                  </svg>
                </button>
                02.12.2021...
              </div>
            </td>
            <td className={cell}>{o.no}</td>
            <td className={cell}>robotpos ...</td>
            <td className={cell}>590...</td>
            <td className={`${cell} text-right`}>15,00</td>
            <td className="border-r border-b border-[#c5d8e8] whitespace-nowrap">
              {o.selected ? (
                <div className="flex h-12 items-center">
                  <span className="flex h-full flex-1 items-center bg-white pl-[5px]">T...</span>
                  <button
                    type="button"
                    className="flex h-12 w-[93px] items-center gap-1 border border-[#8aa3c5] bg-linear-to-b from-[#d5e2f3] to-[#c6d8ef] pl-[3px] text-[13px] font-normal text-[#33517a]"
                  >
                    <RefreshIcon />
                    DEĞİŞTİR
                  </button>
                </div>
              ) : (
                <div className="flex h-12 items-center gap-0.5 pl-1">
                  <FlagIcon />
                  TESLİM E...
                </div>
              )}
            </td>
            <td className="border-r border-b border-[#c5d8e8]">
              <TickBox label={`Bildirildi ${o.no}`} />
            </td>
            <td className="border-b border-[#8aa3c5] pl-px">
              <button
                type="button"
                className="flex h-12 w-full items-center gap-1 overflow-hidden border border-[#8aa3c5] bg-linear-to-b from-[#d5e2f3] to-[#c9daf0] pl-1 text-[13px] font-normal whitespace-nowrap text-[#33517a]"
              >
                <DetailIcon />
                <span className="pl-0.5">Sipariş De</span>
              </button>
            </td>
          </tr>
        ))}
      </tbody>
    </table>
  );
}

function Content() {
  return (
    <section className="flex min-w-0 flex-1 flex-col pr-[22px] pl-[21px]">
      <div className="flex h-[86px] items-center gap-3.5 border-b border-dashed border-[#a8bccd] pt-7 pb-1 pl-0.5">
        <ListIcon />
        <h2 className="pt-1 text-4xl leading-[50px] font-light text-[#0c1824]">Siparişler</h2>
      </div>
      <div className="mx-[5px] mt-[15px] mb-[31px] flex flex-1 flex-col bg-[#e4f1fc]">
        <FilterForm />
        <OrdersTable />
        <div className="flex-1 border-x border-[#8fa5bd] bg-white" />
        <div className="flex h-8 items-center border border-[#8fa5bd] bg-linear-to-b from-[#f0f6fd] to-[#dde7f8] text-sm text-[#2b4a6b]">
          <span className="w-48 border-r border-[#8fa5bd] pr-[5px] text-right">2 Kayıt</span>
          <span className="pl-[168px]">TOPLAM</span>
        </div>
      </div>
    </section>
  );
}

function Toast() {
  return (
    <div role="status" className="absolute right-[1px] bottom-[52px] h-[251px] w-[395px] border-[5px] border-[#d4242c] bg-[#2a8c52]">
      <div className="flex items-center pt-[39px] pr-[27px] pl-[30px]">
        <svg width="34" height="41" viewBox="0 0 34 41" fill="none" aria-hidden="true">
          <ellipse cx="17" cy="20.500" rx="16.500" ry="20" fill="#fff" />
          <path d="M9 21.500l6 7L26 15" stroke="#3b7c56" strokeWidth="3" />
        </svg>
        <p className="flex-1 pl-[15px] text-xl leading-[25px] font-light text-[#dff3e4]">
          SİPARİŞ NO : 34137335
          <br />
          TESLİM EDİLDİ
        </p>
        <button type="button" aria-label="Kapat">
          <svg width="24" height="27" viewBox="0 0 24 27" fill="none" aria-hidden="true">
            <ellipse cx="12" cy="13.500" rx="11.500" ry="13" fill="#fff" />
            <path d="M7.500 8l9 11M16.500 8l-9 11" stroke="#2a6b45" strokeWidth="2.500" />
          </svg>
        </button>
      </div>
    </div>
  );
}

function StatusBar() {
  return (
    <footer className="flex h-8 items-center justify-end gap-[7px] pt-3 pr-[18px] text-[15px] whitespace-nowrap text-[#1f2933]">
      <span className="flex items-center gap-1">
        <InfoDot />
        Ödeme Tipi Yönetimi : GLOBAL
      </span>
      <span>|</span>
      <span className="flex items-center gap-1">
        <InfoDot />
        Menü Yönetimi : GLOBAL
      </span>
      <span>|</span>
      <span className="flex items-center gap-1">
        <OkDot />
        İnternet
      </span>
      <span>|</span>
      <span>2.0.1.0</span>
      <span>|</span>
      <span>infinia</span>
    </footer>
  );
}

export default function App() {
  return (
    <div className="flex min-h-screen flex-col font-['Roboto_Condensed','Roboto',sans-serif]">
      <Defs />
      <TitleBar />
      <Toolbar />
      <div className="relative flex flex-1 flex-col border-r-[6px] border-black bg-[#e4f1fc]">
        <Header />
        <Tabs />
        <main className="mr-1.5 ml-0.5 flex flex-1 border-2 border-[#93a9be] bg-[#cbdeec]">
          <Sidebar />
          <Content />
        </main>
        <StatusBar />
        <Toast />
      </div>
    </div>
  );
}
